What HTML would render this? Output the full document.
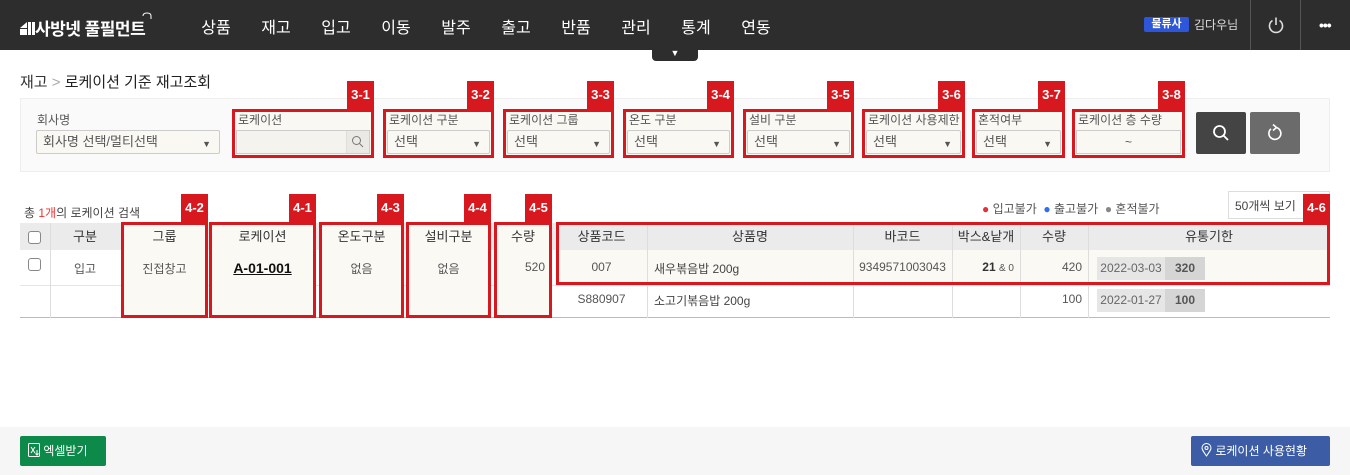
<!DOCTYPE html>
<html><head><meta charset="utf-8">
<style>
*{margin:0;padding:0;box-sizing:border-box}
body{width:1350px;height:475px;position:relative;background:#fff;font-family:"Liberation Sans","Noto Sans CJK KR",sans-serif;color:#333;overflow:hidden;font-size:12px}
.a{position:absolute}
.hdr{left:0;top:0;width:1350px;height:50px;background:#2d2d2d}
.nav{top:14px;color:#fff;font-size:16px;width:60px;text-align:center}
.rb{position:absolute;border:3px solid #d7181f;background:#faf8f3}
.tag{position:absolute;background:#d7181f;color:#fff;font-weight:bold;font-size:13px;text-align:center;line-height:28px;width:27px;height:28px}
.lbl{font-size:12px;color:#555}
.sel{position:absolute;height:24px;border:1px solid #ccc;border-radius:2px;background:#faf8f3;font-size:13px;color:#555;padding:3px 6px;line-height:16px}
.sel:after{content:"▼";position:absolute;right:8px;top:5px;font-size:9px;color:#555}
.th{position:absolute;top:223px;height:27px;line-height:27px;text-align:center;font-size:13px;color:#333}
.td{position:absolute;font-size:12px;color:#555}
.vl{position:absolute;width:1px;background:#ddd}
.cb{position:absolute;width:13px;height:13px;border:1px solid #888;border-radius:3px;background:#fff}
.dc{position:absolute;height:23px;background:#e6e6e6;font-size:12px;color:#666;text-align:center;line-height:23px;white-space:nowrap}
.qc{position:absolute;height:23px;background:#d5d5d5;font-size:12px;font-weight:bold;color:#555;text-align:center;line-height:23px}
</style></head><body>
<div class="a hdr"></div>
<div class="a" style="left:20px;top:15px;color:#fff;font-size:17px;font-weight:bold;letter-spacing:-0.5px">
<svg width="15" height="15" viewBox="0 0 15 15" style="vertical-align:-1px"><path d="M0 7L7 1V7Z M8 1h3v13h-3z M12 1h3v13h-3z M0 8h7v6H0z" fill="#fff"/></svg>사방넷 풀필먼트</div>
<svg class="a" style="left:142px;top:12px" width="10" height="8"><path d="M1 4Q1 1 5 1Q9 1 9 4V7" stroke="#fff" fill="none" stroke-width="1"/></svg>
<div class="a nav" style="left:186px">상품</div>
<div class="a nav" style="left:246px">재고</div>
<div class="a nav" style="left:306px">입고</div>
<div class="a nav" style="left:366px">이동</div>
<div class="a nav" style="left:426px">발주</div>
<div class="a nav" style="left:486px">출고</div>
<div class="a nav" style="left:546px">반품</div>
<div class="a nav" style="left:606px">관리</div>
<div class="a nav" style="left:666px">통계</div>
<div class="a nav" style="left:726px">연동</div>
<div class="a" style="left:652px;top:49px;width:46px;height:12px;background:#2d2d2d;border-radius:0 0 4px 4px;color:#fff;font-size:9px;text-align:center;line-height:9px">▼</div>
<div class="a" style="left:1144px;top:17px;width:45px;height:15px;background:#2d57d8;border-radius:2px;color:#fff;font-size:11px;font-weight:bold;text-align:center;line-height:15px">물류사</div>
<div class="a" style="left:1194px;top:16px;color:#ddd;font-size:12px">김다우님</div>
<div class="a" style="left:1250px;top:0;width:1px;height:50px;background:#555"></div>
<div class="a" style="left:1300px;top:0;width:1px;height:50px;background:#555"></div>
<svg class="a" style="left:1267px;top:16px" width="18" height="18" viewBox="0 0 18 18"><path d="M5.5 4.5A6.5 6.5 0 1 0 12.5 4.5" stroke="#ddd" stroke-width="1.6" fill="none"/><path d="M9 1.5V9" stroke="#ddd" stroke-width="1.6"/></svg>
<div class="a" style="left:1319px;top:17px;color:#fff;font-size:14px;font-weight:bold;letter-spacing:-1px">•••</div>

<div class="a" style="left:20px;top:71px;font-size:15px;color:#333">재고 <span style="color:#aaa">&gt;</span> <span style="color:#222">로케이션 기준 재고조회</span></div>

<div class="a" style="left:20px;top:98px;width:1310px;height:74px;background:#fafafa;border:1px solid #eee"></div>
<div class="a lbl" style="left:37px;top:111px">회사명</div>
<div class="sel" style="left:36px;top:130px;width:184px">회사명 선택/멀티선택</div>

<div class="rb" style="left:232px;top:109px;width:142px;height:49px"></div><div class="tag" style="left:347px;top:81px">3-1</div>
<div class="a lbl" style="left:238px;top:111px">로케이션</div>
<div class="a" style="left:236px;top:130px;width:134px;height:24px;border:1px solid #ccc;background:#f5f3ee"></div>
<div class="a" style="left:346px;top:131px;width:23px;height:22px;background:#ebe9e4;border-left:1px solid #ddd"></div>
<svg class="a" style="left:351px;top:135px" width="13" height="13"><circle cx="5.5" cy="5.5" r="4" stroke="#777" fill="none"/><path d="M8.5 8.5L12 12" stroke="#777"/></svg>

<div class="rb" style="left:383px;top:109px;width:111px;height:49px"></div><div class="tag" style="left:467px;top:81px">3-2</div>
<div class="a lbl" style="left:389px;top:111px">로케이션 구분</div><div class="sel" style="left:387px;top:130px;width:103px">선택</div>
<div class="rb" style="left:503px;top:109px;width:111px;height:49px"></div><div class="tag" style="left:587px;top:81px">3-3</div>
<div class="a lbl" style="left:509px;top:111px">로케이션 그룹</div><div class="sel" style="left:507px;top:130px;width:103px">선택</div>
<div class="rb" style="left:623px;top:109px;width:111px;height:49px"></div><div class="tag" style="left:707px;top:81px">3-4</div>
<div class="a lbl" style="left:629px;top:111px">온도 구분</div><div class="sel" style="left:627px;top:130px;width:103px">선택</div>
<div class="rb" style="left:743px;top:109px;width:111px;height:49px"></div><div class="tag" style="left:827px;top:81px">3-5</div>
<div class="a lbl" style="left:749px;top:111px">설비 구분</div><div class="sel" style="left:747px;top:130px;width:103px">선택</div>
<div class="rb" style="left:862px;top:109px;width:103px;height:49px"></div><div class="tag" style="left:938px;top:81px">3-6</div>
<div class="a lbl" style="left:868px;top:111px">로케이션 사용제한</div><div class="sel" style="left:866px;top:130px;width:95px">선택</div>
<div class="rb" style="left:972px;top:109px;width:93px;height:49px"></div><div class="tag" style="left:1038px;top:81px">3-7</div>
<div class="a lbl" style="left:978px;top:111px">혼적여부</div><div class="sel" style="left:976px;top:130px;width:85px">선택</div>
<div class="rb" style="left:1072px;top:109px;width:113px;height:49px"></div><div class="tag" style="left:1158px;top:81px">3-8</div>
<div class="a lbl" style="left:1078px;top:111px">로케이션 층 수량</div>
<div class="a" style="left:1076px;top:130px;width:105px;height:24px;border:1px solid #ccc;background:#faf8f3;text-align:center;font-size:12px;color:#555;line-height:22px">~</div>

<div class="a" style="left:1196px;top:112px;width:50px;height:42px;background:#444;border-radius:2px"></div>
<svg class="a" style="left:1212px;top:124px" width="18" height="18"><circle cx="7.5" cy="7.5" r="5.5" stroke="#fff" stroke-width="1.8" fill="none"/><path d="M11.5 11.5L16 16" stroke="#fff" stroke-width="1.8"/></svg>
<div class="a" style="left:1250px;top:112px;width:50px;height:42px;background:#6b6b6b;border-radius:2px"></div>
<svg class="a" style="left:1266px;top:123px" width="18" height="20"><path d="M10 4.5A6 6 0 1 1 5 5.8" stroke="#fff" stroke-width="1.6" fill="none"/><path d="M7 1.5L10.5 4.5L7 7.5" stroke="#fff" stroke-width="1.6" fill="none"/></svg>

<div class="a" style="left:24px;top:204px;font-size:12px;color:#444">총 <span style="color:#e33">1개</span>의 로케이션 검색</div>
<div class="a" style="left:982px;top:200px;font-size:12px;color:#555"><span style="color:#e4303a">●</span> 입고불가 &nbsp;<span style="color:#2f6fef">●</span> 출고불가 &nbsp;<span style="color:#888">●</span> 혼적불가</div>
<div class="a" style="left:1228px;top:191px;width:102px;height:28px;border:1px solid #ddd;background:#fff;font-size:12px;color:#444;padding:5px 6px">50개씩 보기</div>

<div class="a" style="left:20px;top:223px;width:1310px;height:27px;background:#ebebeb"></div>
<div class="a" style="left:556px;top:250px;width:774px;height:35px;background:#fbf9f4"></div>
<div class="a" style="left:20px;top:285px;width:1310px;height:1px;background:#e5e5e5"></div>
<div class="a" style="left:20px;top:317px;width:1310px;height:1px;background:#bbb"></div>
<div class="vl" style="left:50px;top:223px;height:95px"></div>
<div class="vl" style="left:647px;top:223px;height:95px"></div>
<div class="vl" style="left:853px;top:223px;height:95px"></div>
<div class="vl" style="left:952px;top:223px;height:95px"></div>
<div class="vl" style="left:1020px;top:223px;height:95px"></div>
<div class="vl" style="left:1088px;top:223px;height:95px"></div>

<div class="cb" style="left:28px;top:231px"></div>
<div class="cb" style="left:28px;top:258px"></div>
<div class="th" style="left:50px;width:70px">구분</div>
<div class="td" style="left:50px;width:70px;text-align:center;top:260px">입고</div>

<div class="rb" style="left:121px;top:222px;width:87px;height:96px;background:#fbf9f4"></div><div class="tag" style="left:181px;top:194px">4-2</div>
<div class="th" style="left:121px;width:87px">그룹</div>
<div class="td" style="left:121px;width:87px;text-align:center;top:260px">진접창고</div>
<div class="rb" style="left:209px;top:222px;width:107px;height:96px;background:#fbf9f4"></div><div class="tag" style="left:289px;top:194px">4-1</div>
<div class="th" style="left:209px;width:107px">로케이션</div>
<div class="td" style="left:209px;width:107px;text-align:center;top:260px;font-size:14px;font-weight:bold;color:#111;text-decoration:underline">A-01-001</div>
<div class="rb" style="left:319px;top:222px;width:85px;height:96px;background:#fbf9f4"></div><div class="tag" style="left:377px;top:194px">4-3</div>
<div class="th" style="left:319px;width:85px">온도구분</div>
<div class="td" style="left:319px;width:85px;text-align:center;top:260px">없음</div>
<div class="rb" style="left:406px;top:222px;width:85px;height:96px;background:#fbf9f4"></div><div class="tag" style="left:464px;top:194px">4-4</div>
<div class="th" style="left:406px;width:85px">설비구분</div>
<div class="td" style="left:406px;width:85px;text-align:center;top:260px">없음</div>
<div class="rb" style="left:494px;top:222px;width:58px;height:96px;background:#fbf9f4"></div><div class="tag" style="left:525px;top:194px">4-5</div>
<div class="th" style="left:494px;width:58px">수량</div>
<div class="td" style="left:494px;width:51px;text-align:right;top:260px">520</div>

<div class="rb" style="left:556px;top:222px;width:774px;height:63px;background:transparent"></div><div class="tag" style="left:1303px;top:194px">4-6</div>
<div class="th" style="left:556px;width:91px">상품코드</div>
<div class="th" style="left:647px;width:206px">상품명</div>
<div class="th" style="left:853px;width:99px">바코드</div>
<div class="th" style="left:952px;width:68px">박스&amp;낱개</div>
<div class="th" style="left:1020px;width:68px">수량</div>
<div class="th" style="left:1088px;width:242px">유통기한</div>

<div class="td" style="left:556px;width:91px;text-align:center;top:260px">007</div>
<div class="td" style="left:654px;top:260px;color:#444">새우볶음밥 200g</div>
<div class="td" style="left:853px;width:99px;text-align:center;top:260px">9349571003043</div>
<div class="td" style="left:952px;width:62px;text-align:right;top:260px"><b style="color:#333">21</b> <span style="font-size:10px">&amp; 0</span></div>
<div class="td" style="left:1020px;width:62px;text-align:right;top:260px">420</div>
<div class="dc" style="left:1097px;top:257px;width:68px">2022-03-03</div>
<div class="qc" style="left:1165px;top:257px;width:40px">320</div>

<div class="td" style="left:556px;width:91px;text-align:center;top:292px">S880907</div>
<div class="td" style="left:654px;top:292px;color:#444">소고기볶음밥 200g</div>
<div class="td" style="left:1020px;width:62px;text-align:right;top:292px">100</div>
<div class="dc" style="left:1097px;top:289px;width:68px">2022-01-27</div>
<div class="qc" style="left:1165px;top:289px;width:40px">100</div>

<div class="a" style="left:0;top:427px;width:1350px;height:48px;background:#f6f6f6"></div>
<div class="a" style="left:20px;top:436px;width:86px;height:30px;background:#0d8a4a;border-radius:2px;color:#fff;font-size:12px;line-height:30px;padding-left:8px">
<svg width="12" height="14" style="vertical-align:-2px"><rect x="0.5" y="0.5" width="11" height="13" stroke="#fff" fill="none" rx="1"/><path d="M3 4L7 10M7 4L3 10M9 7v5M7.5 10.5L9 12L10.5 10.5" stroke="#fff" fill="none"/></svg> 엑셀받기</div>
<div class="a" style="left:1191px;top:436px;width:139px;height:30px;background:#3c5da5;border-radius:2px;color:#fff;font-size:12px;line-height:30px;padding-left:10px">
<svg width="11" height="14" style="vertical-align:-2px"><path d="M5.5 13C2 8 1 6.5 1 5A4.5 4.5 0 0 1 10 5C10 6.5 9 8 5.5 13Z" stroke="#fff" fill="none"/><circle cx="5.5" cy="5" r="1.5" stroke="#fff" fill="none"/></svg> 로케이션 사용현황</div>
</body></html>
